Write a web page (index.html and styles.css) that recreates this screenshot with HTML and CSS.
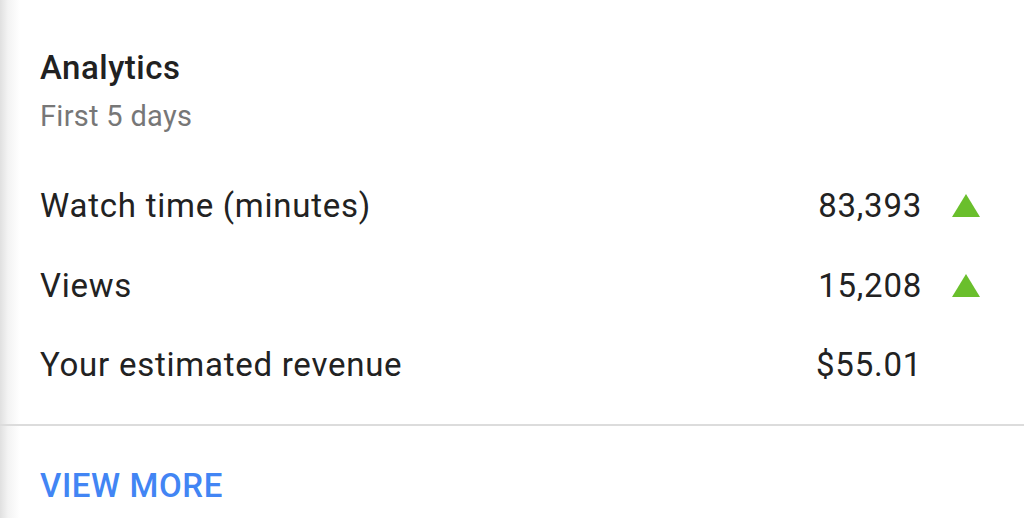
FILE: index.html
```html
<!DOCTYPE html>
<html>
<head>
<meta charset="utf-8">
<link rel="stylesheet" href="styles.css">
</head>
<body>
<div class="card">
  <div class="content">
    <h1 class="title">Analytics</h1>
    <div class="subtitle">First 5 days</div>
    <div class="rows">
      <div class="row">
        <span class="label">Watch time (minutes)</span>
        <span class="value">83,393</span>
        <span class="trend"><svg width="28" height="23" viewBox="0 0 28 23"><polygon points="14,0 28,23 0,23" fill="#6abf2c"/></svg></span>
      </div>
      <div class="row">
        <span class="label">Views</span>
        <span class="value">15,208</span>
        <span class="trend"><svg width="28" height="23" viewBox="0 0 28 23"><polygon points="14,0 28,23 0,23" fill="#6abf2c"/></svg></span>
      </div>
      <div class="row">
        <span class="label">Your estimated revenue</span>
        <span class="value">$55.01</span>
        <span class="trend"></span>
      </div>
    </div>
  </div>
  <div class="divider"></div>
  <div class="footer">
    <a class="more">VIEW MORE</a>
  </div>
</div>
</body>
</html>
```

FILE: styles.css
```css
html, body {
  margin: 0;
  padding: 0;
  background: #ffffff;
}
body {
  width: 1024px;
  height: 518px;
  overflow: hidden;
  font-family: Roboto, "Noto Sans", sans-serif;
  background: linear-gradient(to right, #e0e0e0 0px, #f3f3f3 8px, #ffffff 20px);
}
.card {
  height: 518px;
}
.content {
  padding: 48px 0 0 40px;
}
.title {
  margin: 0;
  font-size: 33px;
  font-weight: 500;
  letter-spacing: 0.5px;
  color: #212121;
  line-height: 40px;
}
.subtitle {
  font-size: 29px;
  letter-spacing: 0.3px;
  color: #777777;
  line-height: 40px;
  margin-top: 8px;
}
.rows {
  margin-top: 30px;
  display: flex;
  flex-direction: column;
}
.row {
  display: flex;
  align-items: center;
  height: 79.5px;
  font-size: 33px;
  letter-spacing: 0.75px;
  color: #222222;
}
.label {
  flex: 1;
}
.value {
  text-align: right;
}
.trend {
  width: 28px;
  margin-left: 30px;
  margin-right: 44px;
  display: flex;
  align-items: center;
  height: 23px;
}
.divider {
  height: 2px;
  background: #dcdcdc;
  margin-top: 19px;
}
.footer {
  padding: 40px 0 0 40px;
  line-height: 40px;
}
.more {
  font-size: 33px;
  font-weight: 500;
  color: #4285f4;
  letter-spacing: 0.6px;
}
```
